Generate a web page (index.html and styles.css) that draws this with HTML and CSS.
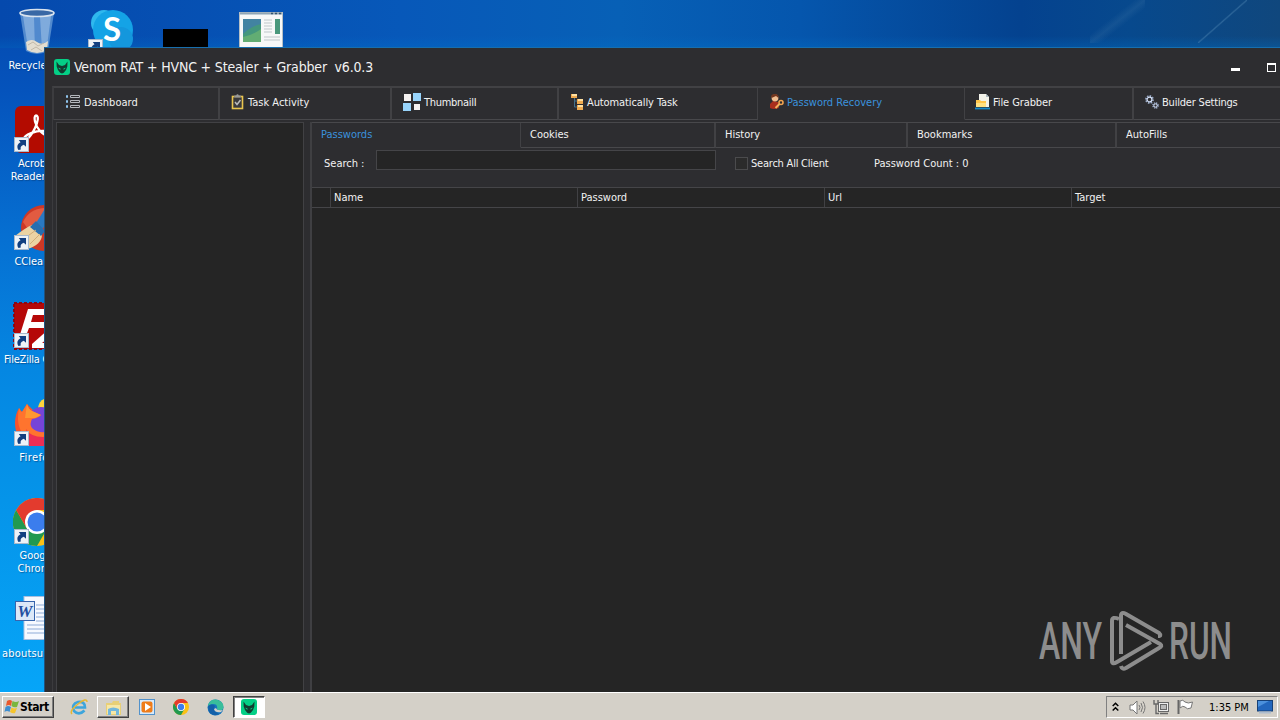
FILE: index.html
```html
<!DOCTYPE html>
<html lang="en">
<head>
    <meta charset="UTF-8">
    <title>Venom RAT + HVNC + Stealer + Grabber</title>
    <link rel="stylesheet" href="styles.css">
</head>
<body>
    <svg width="0" height="0" class="defs">
        <symbol id="shortcut" viewBox="0 0 15 15">
            <rect x=".5" y=".5" width="14" height="14" fill="#eef2f7" stroke="#a9b9cc"/>
            <path d="M4.500 13C2.600 10 3.200 6.800 6.500 5.200L4.800 3H12V9.800L9.800 7.800C7.400 8.600 6 10 6.800 12.600Z" fill="#123f80"/>
        </symbol>
        <symbol id="venom" viewBox="0 0 16 16">
            <rect width="16" height="16" rx="3" fill="#04cf86"/>
            <path d="M2.500 2.500 5 6 8 7 11 6 13.500 2.500 13.300 7.500 12 11 9.800 13.800 8 14.500 6.200 13.800 4 11 2.700 7.500Z" fill="#123c31"/>
            <path d="M4.500 8.500 7 9.900 6.300 10.600 5 10ZM11.500 8.500 9 9.900 9.700 10.600 11 10Z" fill="#04cf86"/>
        </symbol>
        <symbol id="chrome" viewBox="0 0 48 48">
            <circle cx="24" cy="24" r="24" fill="#fbc116"/>
            <path d="M3.200 12A24 24 0 0 0 24 48L34.400 30 24 24 13.600 30Z" fill="#219950"/>
            <path d="M3.200 12A24 24 0 0 1 44.800 12H24L13.600 30Z" fill="#e33b2e"/>
            <circle cx="24" cy="24" r="12" fill="#fff"/>
            <circle cx="24" cy="24" r="9.500" fill="#3b7ded"/>
        </symbol>
    </svg>

    <main class="desktop">
        <div class="shine"></div>

        <div class="icon recycle">
            <svg width="38" height="48" viewBox="0 0 38 48">
                <path d="M2 5 8 43Q19 49 30 43L36 5Z" fill="#6b9fd8" opacity=".75"/>
                <path d="M5 8 10 40 17 43 16 9ZM22 9 24 42 29 38 33 8Z" fill="#b9d3ee" opacity=".45"/>
                <path d="M8 34Q14 30 19 34T30 33L29 42Q19 48 9 42Z" fill="#e3ddd0"/>
                <path d="M10 37 15 34 20 38 26 35M13 42 18 39 24 43" fill="none" stroke="#b9af9e" stroke-width=".8"/>
                <ellipse cx="19" cy="5" rx="17" ry="3.500" fill="#3968a5" stroke="#d9e3ee" stroke-width="1.600"/>
            </svg>
            <span>Recycle Bin</span>
        </div>
        <div class="icon skype">
            <svg width="48" height="48" viewBox="0 0 48 48">
                <circle cx="16" cy="16" r="13" fill="#2fb8ee"/>
                <circle cx="25" cy="23" r="20" fill="#14a3e6"/>
                <circle cx="33" cy="32" r="12" fill="#1497dd"/>
                <text x="24" y="34" class="skype-s">S</text>
                <use href="#shortcut" x="0" y="32" width="15" height="15"/>
            </svg>
        </div>
        <div class="icon black"></div>
        <div class="icon app">
            <svg width="44" height="36" viewBox="0 0 44 36">
                <rect x=".5" y=".5" width="43" height="35" fill="#f7f8f8" stroke="#b6bfc5"/>
                <path d="M1 1.500H43" stroke="#8fa5b5" stroke-width="2"/>
                <path d="M32 1.500h2m2 0h2m2 0h2" stroke="#34556f" stroke-width="1.500"/>
                <rect x="4" y="7" width="18" height="23" fill="#44977d"/>
                <path d="M4 7H22V12Q12 14 4 22Z" fill="#4283a2"/>
                <path d="M4 25Q14 23 22 17V30H4Z" fill="#62ad73"/>
                <path d="M25 8H33M25 11H33M25 14H33M25 17H33M25 20H33M25 25H41M25 28H41" stroke="#bfc7ca"/>
                <rect x="36" y="7" width="5" height="15" fill="#4a987c"/>
            </svg>
        </div>
        <div class="icon acrobat">
            <svg width="48" height="48" viewBox="0 0 48 48">
                <rect x="2" width="46" height="47" rx="6" fill="#b30b00"/>
                <path d="M23 9.500C26 9.500 25 16 22 22C18 30 14 35 11 33C11 29 23 24 32 25C40 27 35 33 27 25C22 20 20 10 23 9.500Z" fill="none" stroke="#fff" stroke-width="2.300"/>
                <use href="#shortcut" x="1" y="31" width="15" height="15"/>
            </svg>
            <span>Acrobat<br>Reader DC</span>
        </div>
        <div class="icon ccleaner">
            <svg width="48" height="48" viewBox="0 0 48 48">
                <circle cx="31" cy="24" r="23" fill="#cd3826"/>
                <path d="M10 18Q16 5 31 4V17L17 28Z" fill="#e25b41"/>
                <path d="M33 3 20 24 27 29 42 6Z" fill="#2a78c2"/>
                <path d="M19 21Q12 24 2 32L14 45Q29 41 29 30Z" fill="#ecd3a3"/>
                <path d="M23 17 17 23 28 32 32 27Z" fill="#266eb1"/>
                <path d="M12 34 23 26M17 40 27 30" stroke="#d2ad78"/>
                <use href="#shortcut" x="1" y="31" width="15" height="15"/>
            </svg>
            <span>CCleaner</span>
        </div>
        <div class="icon filezilla">
            <svg width="48" height="48" viewBox="0 0 48 48">
                <rect x="1" y="1" width="46" height="46" fill="#b50808" stroke="#8b0713" stroke-width="2" stroke-dasharray="3 2"/>
                <path d="M15 7H40L38 13H20L18 20H34L32 26H16L11 39H5Z" fill="#fff"/>
                <path d="M26 20H48V26L29 41H48V46H19V42L37 26H26Z" fill="#fff"/>
                <use href="#shortcut" x="1" y="31" width="15" height="15"/>
            </svg>
            <span>FileZilla Client</span>
        </div>
        <div class="icon firefox">
            <svg width="48" height="48" viewBox="0 0 48 48">
                <path d="M21 12Q27 9 30 11L48 22V38L38 47H15Q2 39 2 24Q2 16 6 9L9 13 14 5Z" fill="#f7532d"/>
                <path d="M25 9Q26 2 31 0L44 14 39 21 27 14Z" fill="#ffd43b"/>
                <circle cx="28" cy="21" r="13" fill="#7644d8"/>
                <path d="M6 9Q7 12 9 13L14 5Q15 10 19 12L28 16Q25 19 19 20Q14 30 27 33Q38 34 45 27Q38 47 20 43Q1 34 6 9Z" fill="#ff742e"/>
                <path d="M14 5Q15 10 19 12L28 16 22 19 12 19Z" fill="#ff9831"/>
                <path d="M13 30Q20 42 44 36L36 47H16Z" fill="#ec2e55"/>
                <use href="#shortcut" x="1" y="32" width="15" height="15"/>
            </svg>
            <span>Firefox</span>
        </div>
        <div class="icon google">
            <svg width="48" height="48" viewBox="0 0 48 48">
                <use href="#chrome" width="48" height="48"/>
                <use href="#shortcut" x="1" y="31" width="15" height="15"/>
            </svg>
            <span>Google<br>Chrome</span>
        </div>
        <div class="icon word">
            <svg width="40" height="46" viewBox="0 0 40 46">
                <rect x="9" y=".5" width="31" height="43" fill="#f6f9ff" stroke="#a9bfdf"/>
                <path d="M21 9H40M21 13H40M21 17H40M21 21H40M21 25H40M12 29H40M12 33H40M12 37H40" stroke="#8eabd7"/>
                <rect x=".5" y="5.500" width="19" height="19" fill="#dce8f8" stroke="#3765ad"/>
                <text x="10" y="20.500" class="word-w">W</text>
            </svg>
            <span>aboutsuburb</span>
        </div>

        <section class="window">
            <header class="titlebar">
                <svg width="16" height="16"><use href="#venom"/></svg>
                <h1>Venom RAT + HVNC + Stealer + Grabber&nbsp; v6.0.3</h1>
                <i class="minimize"></i>
                <i class="maximize"></i>
            </header>

            <nav class="tabs">
                <div class="tab t1">
                    <svg width="16" height="16" viewBox="0 0 16 16">
                        <path d="M1 2.500H3M1 7.500H3M1 12.500H3" stroke="#8fc3ec" stroke-width="2.400"/>
                        <path d="M5.500 1.500H14.500V3.500H5.500ZM5.500 6.500H14.500V8.500H5.500ZM5.500 11.500H14.500V13.500H5.500Z" fill="none" stroke="#b4b7bc"/>
                    </svg>Dashboard
                </div>
                <div class="tab t2">
                    <svg width="14" height="16" viewBox="0 0 14 16">
                        <rect x="1.500" y="2.500" width="10" height="12" fill="#39393c" stroke="#eac54f" stroke-width="1.600"/>
                        <path d="M3.500 3.500V1.500H5L6.500 0 8 1.500H9.500V3.500Z" fill="#999" stroke="#777" stroke-width=".5"/>
                        <path d="M4 8 6 10.500 9.500 6" fill="none" stroke="#bbb" stroke-width="1.500"/>
                    </svg>Task Activity
                </div>
                <div class="tab t3">
                    <svg width="18" height="18" viewBox="0 0 18 18">
                        <path d="M1 1H8V8H1ZM11 11H17V17H11Z" fill="#f4f1f0"/>
                        <path d="M10 0H18V8H10ZM0 10H8V18H0Z" fill="#98d4fb"/>
                    </svg>ThumbnailI
                </div>
                <div class="tab t4">
                    <svg width="13" height="16" viewBox="0 0 13 16">
                        <path d="M3.500 4V13H8M3.500 7H8" fill="none" stroke="#43718d"/>
                        <path d="M0 0H6V4H0ZM6 5H12V10H6ZM6 11H12V16H6Z" fill="#efaa4f"/>
                        <path d="M1 0H6V2H1ZM7 5H12V7H7ZM7 11H12V13H7Z" fill="#ffe0a1"/>
                    </svg>Automatically Task
                </div>
                <div class="tab t5 active">
                    <svg width="16" height="16" viewBox="0 0 16 16">
                        <path d="M1 14V10L4 7 9 8 10 14Q5 16 1 14Z" fill="#a92e1d"/>
                        <circle cx="6" cy="4" r="3.400" fill="#efbd90"/>
                        <path d="M2.500 4Q1 0 6 0Q10 0 9.500 4L7 2Z" fill="#71351e"/>
                        <circle cx="12" cy="8.500" r="2" fill="none" stroke="#f1a34f" stroke-width="1.600"/>
                        <path d="M10.500 10 6.500 14" stroke="#f4b15d" stroke-width="2"/>
                    </svg>Password Recovery
                </div>
                <div class="tab t6">
                    <svg width="16" height="16" viewBox="0 0 16 16">
                        <path d="M4 0H11L14 3V13H4Z" fill="#f2f2e9"/>
                        <path d="M11 0V3H14" fill="#a9b8bf"/>
                        <path d="M1 6H5L6 7H11V13H1Z" fill="#ffc64a"/>
                        <path d="M1 9H11V13H1Z" fill="#ffe181"/>
                        <path d="M0 14.500H15" stroke="#168ac9" stroke-width="1.800"/>
                    </svg>File Grabber
                </div>
                <div class="tab t7">
                    <svg width="14" height="14" viewBox="0 0 14 14" fill="none">
                        <circle cx="4.500" cy="4.500" r="3.500" stroke="#9cadcb" stroke-width="1.800" stroke-dasharray="1.500 1.200"/>
                        <circle cx="4.500" cy="4.500" r="2.400" stroke="#d4e0f7" stroke-width="1.200"/>
                        <circle cx="10.500" cy="10.500" r="2.500" stroke="#9cadcb" stroke-width="1.600" stroke-dasharray="1.200 .8"/>
                        <circle cx="10.500" cy="10.500" r="1.600" stroke="#d4e0f7"/>
                    </svg>Builder Settings
                </div>
            </nav>

            <div class="content">
                <aside class="clients"></aside>
                <div class="panel">
                    <nav class="subtabs">
                        <div class="subtab s1 active">Passwords</div>
                        <div class="subtab s2">Cookies</div>
                        <div class="subtab s3">History</div>
                        <div class="subtab s4">Bookmarks</div>
                        <div class="subtab s5">AutoFills</div>
                    </nav>
                    <div class="search">
                        <label class="search-label" for="search">Search :</label>
                        <input id="search" type="text">
                        <i class="checkbox"></i>
                        <span class="all">Search All Client</span>
                        <span class="count">Password Count : 0</span>
                    </div>
                    <div class="grid-head">
                        <span></span><span>Name</span><span>Password</span><span>Url</span><span>Target</span>
                    </div>
                    <div class="grid-body"></div>
                </div>
            </div>
        </section>

        <svg class="watermark" width="230" height="64" viewBox="0 0 230 64">
            <text x="2" y="49.500" textLength="63" lengthAdjust="spacingAndGlyphs">ANY</text>
            <text x="132" y="49.500" textLength="63" lengthAdjust="spacingAndGlyphs">RUN</text>
            <g fill="none" stroke="#8d8d8d" stroke-width="4" stroke-linejoin="round">
                <path d="M82 10Q75 7 75 12V52Q75 56 80 53L114 33"/>
                <path d="M84 45V7Q84 2 89 5L122 24Q125 27 121 27"/>
                <path d="M89 16 123 35Q126 37 122 39L89 59Q85 61 84 57"/>
            </g>
        </svg>
    </main>

    <footer class="taskbar">
        <button class="start">
            <svg width="16" height="16" viewBox="0 0 16 16">
                <path d="M3 2Q6 0 8 2L7 7Q5 5 2 7Z" fill="#e9582b"/>
                <path d="M8.500 2Q12 4 15 2L13 8Q10 9 7.500 7Z" fill="#7ab63d"/>
                <path d="M1.500 8Q4 6 7 8L5.500 13Q3 11 .5 13Z" fill="#3d8ed0"/>
                <path d="M7.500 8.500Q10 10 13 9L11 14Q9 15 6 13Z" fill="#f6c52d"/>
            </svg>Start
        </button>
        <div class="task">
            <svg width="18" height="18" viewBox="0 0 18 18">
                <path d="M14.500 12.500Q9 18 4 13Q1 6 8 4Q15 3 15 9.500H5" fill="none" stroke="#3da5dc" stroke-width="2.600"/>
                <path d="M2 16Q-1 13 8 6Q17-1 17 4" fill="none" stroke="#e7b731" stroke-width="1.500"/>
            </svg>
        </div>
        <div class="task raised">
            <svg width="17" height="17" viewBox="0 0 17 17">
                <path d="M1 4H7L8 2H14V4H16V16H1Z" fill="#e8cf76"/>
                <path d="M2 6H15V15H2Z" fill="#f7e7a6"/>
                <path d="M3 16V10Q8 7 14 10V16H11V12H6V16Z" fill="#73b7dc"/>
            </svg>
        </div>
        <div class="task">
            <svg width="16" height="16" viewBox="0 0 16 16">
                <rect x=".5" y=".5" width="15" height="15" fill="#d8eafa" stroke="#5292cb"/>
                <rect x="2.500" y="2.500" width="11" height="11" rx="2" fill="#ef7c19"/>
                <path d="M6 4 12 8 6 12Z" fill="#fff"/>
            </svg>
        </div>
        <div class="task"><svg width="16" height="16"><use href="#chrome"/></svg></div>
        <div class="task">
            <svg width="17" height="17" viewBox="0 0 17 17">
                <circle cx="8.500" cy="8.500" r="8" fill="#1674bd"/>
                <path d="M1 6Q4-1 11 1Q18 4 16 10Q13 13 10 10Q11 5 6 5Q3 5 1 7Z" fill="#39be9b"/>
                <path d="M1 7Q5 4 8 7Q5 12 12 15Q6 18 2 13Z" fill="#1460a8"/>
                <path d="M9 9Q10 12 16 11L14 13Q8 14 7 10Z" fill="#d4d0c8"/>
            </svg>
        </div>
        <div class="task pressed"><svg width="16" height="16"><use href="#venom"/></svg></div>

        <div class="tray">
            <svg class="arrows" width="7" height="10" viewBox="0 0 7 10"><path d="M.7 4 3.500 1.200 6.300 4M.7 8.500 3.500 5.700 6.300 8.500" fill="none" stroke="#000" stroke-width="1.500"/></svg>
            <svg width="17" height="15" viewBox="0 0 17 15" fill="none" stroke="#777">
                <path d="M1 5H4L8 1V14L4 10H1Z" fill="#fff"/>
                <path d="M10 5Q12 7.500 10 10M12 3Q15 7.500 12 12M14 1.500Q18 7.500 14 13.500"/>
            </svg>
            <svg width="17" height="16" viewBox="0 0 17 16" fill="none" stroke="#686868">
                <rect x="5.500" y="3.500" width="10" height="9" fill="#eee"/>
                <rect x="7.500" y="5.500" width="6" height="5" fill="#bbb"/>
                <path d="M7 14.500H15M1 1V5H5V1M3 5V14.500H6" stroke-width="1.400"/>
            </svg>
            <svg width="17" height="16" viewBox="0 0 17 16">
                <path d="M1.500 1V15" stroke="#666" stroke-width="2"/>
                <path d="M3 2Q6 0 8 3Q11 5 15.500 3L14 9Q10 11 8 8Q6 6 3 9Z" fill="#fff" stroke="#777"/>
            </svg>
            <time>1:35 PM</time>
            <svg width="16" height="14" viewBox="0 0 16 14">
                <rect x=".5" y=".5" width="15" height="10.500" fill="#2367bd" stroke="#174176"/>
                <path d="M1 1H12L1 7Z" fill="#4c91dc"/>
                <path d="M2 12.500H14" stroke="#aebdce" stroke-width="2"/>
            </svg>
        </div>
    </footer>
</body>
</html>
```
FILE: styles.css
```css
* {
    margin: 0;
    padding: 0;
    box-sizing: border-box;
}

body {
    display: flex;
    flex-direction: column;
    width: 1280px;
    height: 720px;
    overflow: hidden;
    font-family: "DejaVu Sans Condensed", "DejaVu Sans", sans-serif;
    font-stretch: condensed;
    font-size: 11px;
    line-height: 13px;
    color: #f2f2f2;
}

svg {
    display: block;
    flex: none;
}

.defs {
    position: absolute;
}

.desktop {
    position: relative;
    height: 692px;
    overflow: hidden;
    background: linear-gradient(#0549ad 0, #0553bc 90px, #0670d2 240px, #0587e2 370px, #0594e9 500px, #06a5f8 692px);
}

.shine {
    height: 48px;
    background:
        linear-gradient(to bottom right, transparent 48%, rgba(75, 130, 175, .5) 50%, transparent 52%) 1198px 0 / 49px 43px no-repeat,
        linear-gradient(to bottom right, transparent 40%, rgba(60, 115, 165, .25) 50%, transparent 60%) 1090px 0 / 55px 43px no-repeat,
        linear-gradient(to top, rgba(0, 116, 204, .3), transparent 12px),
        linear-gradient(to right, #0549ad, #0758b9 400px, #0760b6 620px, #0556ad 800px, #04428f 1020px, #07498d 1130px, #10477d 1280px);
}

/* desktop icons */
.icon {
    position: absolute;
    left: -9px;
    width: 92px;
    display: flex;
    flex-direction: column;
    align-items: center;
    text-align: center;
    color: #fff;
    white-space: nowrap;
    text-shadow: 1px 1px 1px rgba(7, 55, 111, .6);
}

.icon svg {
    margin-bottom: 3px;
}

.recycle { top: 8px; }
.skype { left: 66px; top: 7px; }
.black { left: 163px; top: 29px; width: 45px; height: 20px; background: #000; }
.app { left: 239px; top: 12px; width: 44px; }
.acrobat { top: 106px; }
.ccleaner { top: 204px; }
.filezilla { top: 302px; letter-spacing: -.2px; }
.firefox { top: 399px; }
.firefox svg { margin-bottom: 4px; }
.firefox span { letter-spacing: .4px; }
.google { top: 498px; }
.word { top: 596px; letter-spacing: .2px; }
.word svg { margin: 0 5px 5px 0; }
.word span { margin-right: 5px; }

.skype-s {
    font: bold 33px Lato, sans-serif;
    text-anchor: middle;
    text-shadow: none;
    fill: #fff;
}

.word-w {
    font: italic bold 17px "Liberation Serif", serif;
    text-anchor: middle;
    text-shadow: none;
    fill: #234f9f;
}

/* application window */
.window {
    position: absolute;
    left: 44px;
    top: 47px;
    width: 1236px;
    height: 645px;
    padding-left: 7px;
    background: #2d2d30;
    border-top: 1px solid #176fae;
    border-left: 1px solid #20527e;
}

.titlebar {
    display: flex;
    align-items: center;
    height: 38px;
    padding-left: 2px;
}

.titlebar h1 {
    margin-left: 4px;
    font-size: 14px;
    font-weight: normal;
    line-height: 18px;
    letter-spacing: -.17px;
    white-space: nowrap;
}

.minimize {
    width: 9px;
    height: 3px;
    margin: 4px 27px 0 auto;
    background: #fff;
}

.maximize {
    width: 9px;
    height: 9px;
    margin-right: 4px;
    border: 1px solid #fff;
    border-top-width: 2px;
}

.tabs {
    display: flex;
    height: 34px;
    border-top: 2px solid #414144;
    border-left: 2px solid #3c3c3f;
}

.tab {
    display: flex;
    align-items: center;
    flex: none;
    padding: 0 0 3px 11px;
    border-right: 2px solid #414144;
    border-bottom: 1px solid #48484b;
    white-space: nowrap;
}

.tab svg {
    margin-right: 3px;
}

.t1 { width: 166px; }
.t2 { width: 172px; }
.t3 { width: 167px; letter-spacing: -.3px; }
.t4 { width: 199px; padding-left: 12px; letter-spacing: -.1px; }
.t5 { width: 207px; padding-left: 11px; }
.t5 svg, .t6 svg { margin-right: 2px; }
.t6 { width: 169px; padding-left: 10px; letter-spacing: -.1px; }
.t7 { width: 160px; letter-spacing: -.2px; }
.t4, .t5 { border-right-width: 1px; }

.active {
    color: #3b92dd;
    border-bottom-color: transparent;
}

.content {
    display: flex;
    height: 572px;
    padding: 2px 0 0 3px;
    border-left: 1px solid #3b3b3e;
}

.clients {
    flex: none;
    width: 248px;
    margin-right: 6px;
    background: #252525;
    border: 1px solid #414144;
    border-bottom: 0;
}

.panel {
    flex: 1;
    min-width: 0;
    display: flex;
    flex-direction: column;
    border-left: 2px solid #3f3f42;
}

.subtabs {
    display: flex;
    height: 26px;
    border-top: 1px solid #48484b;
}

.subtab {
    flex: none;
    padding: 5px 0 0 9px;
    border-right: 2px solid #414144;
    border-bottom: 1px solid #48484b;
}

.subtab.active {
    border-bottom-color: transparent;
}

.s1 { width: 209px; border-right-width: 1px; }
.s2 { width: 195px; }
.s3 { width: 192px; }
.s4 { width: 209px; }
.s5 { width: 170px; }

.search {
    display: flex;
    height: 39px;
    padding: 2px 0 0 12px;
    white-space: nowrap;
}

.search-label,
.all,
.count {
    margin-top: 7px;
}

.search-label {
    width: 52px;
}

#search {
    width: 340px;
    height: 20px;
    background: #252525;
    border: 1px solid #454548;
    border-radius: 0;
}

.checkbox {
    width: 13px;
    height: 13px;
    margin: 7px 3px 0 19px;
    background: #2b2b2b;
    border: 1px solid #4b4b4d;
}

.all {
    width: 123px;
    letter-spacing: -.22px;
}

.grid-head {
    display: grid;
    grid-template-columns: 19px 247px 247px 247px 1fr;
    height: 21px;
    background: #252525;
    border-top: 1px solid #454548;
    border-bottom: 1px solid #454548;
}

.grid-head span {
    padding: 3px 0 0 3px;
    border-right: 1px solid #414144;
}

.grid-head span:last-child {
    border-right: 0;
}

.grid-body {
    flex: 1;
    background: #252525;
}

.watermark {
    position: absolute;
    left: 1037px;
    top: 609px;
}

.watermark text {
    font: 500 52px Roboto, sans-serif;
    fill: #8d8d8d;
}

/* taskbar */
.taskbar {
    display: flex;
    height: 28px;
    padding: 3px 2px 2px;
    background: #d4d0c8;
    border-top: 1px solid #fff;
    color: #000;
}

.start {
    display: flex;
    align-items: center;
    width: 52px;
    height: 22px;
    margin-right: 9px;
    padding-left: 1px;
    font: bold 12px "DejaVu Sans Condensed", sans-serif;
    letter-spacing: -.4px;
    background: #d4d0c8;
    border: 1px solid;
    border-color: #fff #404040 #404040 #fff;
    box-shadow: inset -1px -1px #808080;
}

.task {
    display: flex;
    align-items: center;
    justify-content: center;
    width: 32px;
    height: 22px;
    margin-right: 2px;
}

.raised {
    border: 1px solid;
    border-color: #fff #404040 #404040 #fff;
    box-shadow: inset -1px -1px #808080;
}

.pressed {
    background: #fff;
    border: 1px solid;
    border-color: #404040 #fff #fff #404040;
    box-shadow: inset 1px 1px #808080;
}

.tray {
    display: flex;
    align-items: center;
    width: 172px;
    height: 22px;
    margin-left: auto;
    padding-left: 5px;
    border: 1px solid;
    border-color: #808080 #fff #fff #808080;
}

.tray svg {
    margin-right: 7px;
}

.tray .arrows {
    margin-right: 10px;
}

.tray time {
    width: 44px;
    margin: 0 8px 0 8px;
    white-space: nowrap;
}
```
